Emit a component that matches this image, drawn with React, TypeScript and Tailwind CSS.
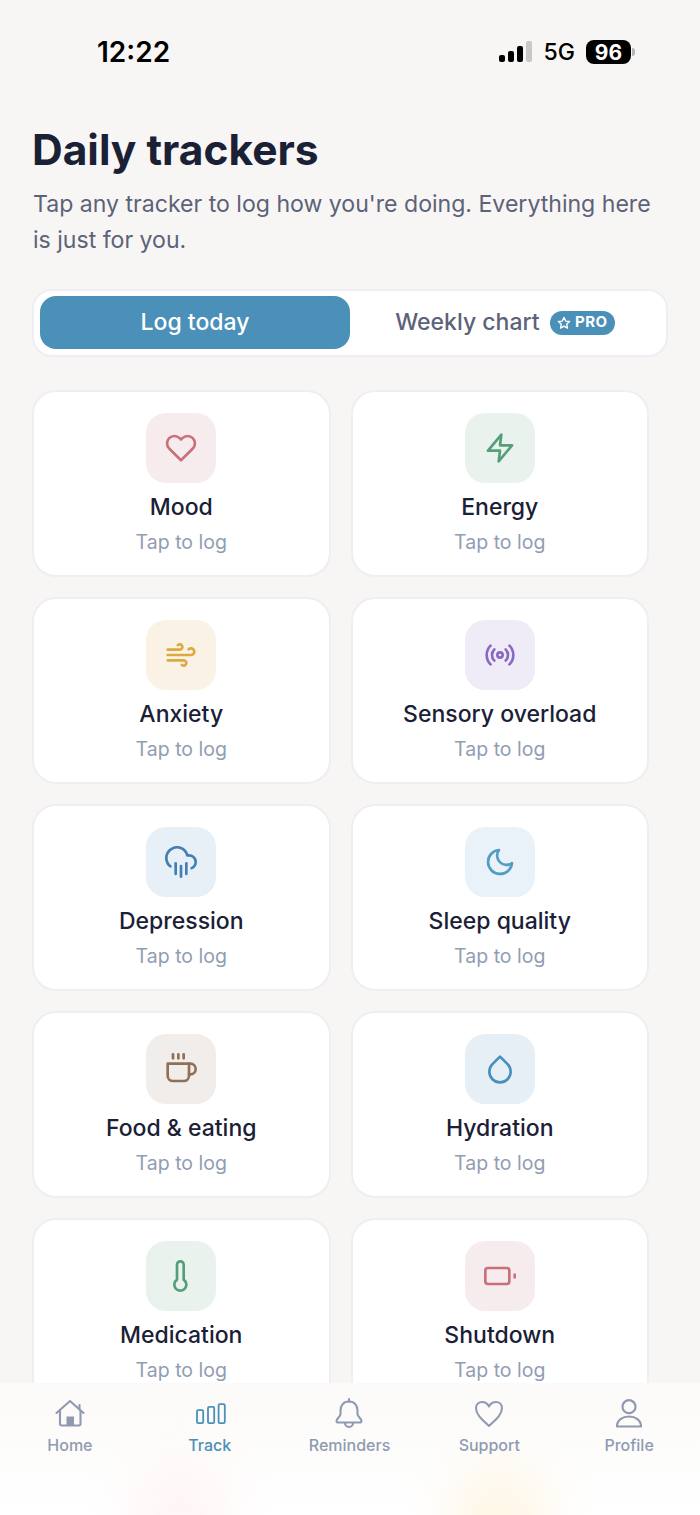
import React from 'react';
import { FiHeart, FiZap, FiWind, FiRadio, FiCloudRain, FiMoon, FiCoffee, FiDroplet, FiThermometer, FiBattery } from 'react-icons/fi';

const TRACKERS = [
  { name: 'Mood', Icon: FiHeart, box: 'bg-[#f6ecee]', color: 'text-[#c9707a]' },
  { name: 'Energy', Icon: FiZap, box: 'bg-[#e9f2ed]', color: 'text-[#559f78]' },
  { name: 'Anxiety', Icon: FiWind, box: 'bg-[#faf3e5]', color: 'text-[#dcaa42]' },
  { name: 'Sensory overload', Icon: FiRadio, box: 'bg-[#efecf7]', color: 'text-[#8a68c4]' },
  { name: 'Depression', Icon: FiCloudRain, box: 'bg-[#e7eff7]', color: 'text-[#437fb3]' },
  { name: 'Sleep quality', Icon: FiMoon, box: 'bg-[#e9f2f8]', color: 'text-[#529dc2]' },
  { name: 'Food & eating', Icon: FiCoffee, box: 'bg-[#f1edea]', color: 'text-[#8f7057]' },
  { name: 'Hydration', Icon: FiDroplet, box: 'bg-[#e7eff6]', color: 'text-[#4a8fbc]' },
  { name: 'Medication', Icon: FiThermometer, box: 'bg-[#e9f2ed]', color: 'text-[#559f78]' },
  { name: 'Shutdown', Icon: FiBattery, box: 'bg-[#f6ecee]', color: 'text-[#c9707a]' },
];

const NavSvg = ({ children, sw = 2.1 }: { children: React.ReactNode; sw?: number }) => (
  <svg width="34" height="34" viewBox="0 0 34 34" fill="none" stroke="currentColor" strokeWidth={sw} strokeLinecap="round" strokeLinejoin="round">
    {children}
  </svg>
);

const HomeIcon = () => (
  <NavSvg>
    <path d="M3.500 17 L17 5 L30.500 17" />
    <path d="M26.500 9 V13" />
    <path d="M7 14.500 V28 a1.500 1.500 0 0 0 1.500 1.500 H26 a1.500 1.500 0 0 0 1.500 -1.500 V14.500" />
    <rect x="13.500" y="20.500" width="7.500" height="9" fill="currentColor" stroke="none" />
  </NavSvg>
);

const TrackIcon = () => (
  <NavSvg sw={1.8}>
    <rect x="4" y="14.200" width="6.200" height="13" rx="1.200" />
    <rect x="15" y="10.900" width="6.200" height="16.300" rx="1.200" />
    <rect x="25.600" y="8.200" width="6.200" height="19" rx="1.200" />
  </NavSvg>
);

const BellIcon = () => (
  <NavSvg>
    <path d="M17 3 V5.500" />
    <path d="M17 5.500 C11 5.500 8.500 10 8.500 14.500 V18 C8.500 21 4.500 22.500 4.500 25 C4.500 26 5 26.500 6.500 26.500 H27.500 C29 26.500 29.500 26 29.500 25 C29.500 22.500 25.500 21 25.500 18 V14.500 C25.500 10 23 5.500 17 5.500 Z" />
    <path d="M13 27 a4 4 0 0 0 8 0" />
  </NavSvg>
);

const NavHeart = () => (
  <NavSvg>
    <path d="M17 30 C9.500 23 4 18.500 4 12 C4 8 7 6 10 6 C13 6 15.500 7.500 17 10.500 C18.500 7.500 21 6 24 6 C27 6 30 8 30 12 C30 18.500 24.500 23 17 30 Z" />
  </NavSvg>
);

const ProfileIcon = () => (
  <NavSvg sw={2.2}>
    <circle cx="17" cy="10.700" r="6.500" />
    <path d="M5 30.500 C5 24 10.500 20.500 17 20.500 C23.500 20.500 29 24 29 30.500 Z" />
  </NavSvg>
);

const NAV = [
  { label: 'Home', icon: <HomeIcon /> },
  { label: 'Track', icon: <TrackIcon />, active: true },
  { label: 'Reminders', icon: <BellIcon /> },
  { label: 'Support', icon: <NavHeart /> },
  { label: 'Profile', icon: <ProfileIcon /> },
];

const StatusBar = () => (
  <div className="h-[104px] shrink-0 flex items-center justify-between pl-[97px] pr-[65px] text-black">
    <span className="text-[28px] font-semibold leading-none">12:22</span>
    <div className="flex items-center">
      <svg width="36" height="24" viewBox="0 0 36 24" className="mr-[10px]">
        <rect x="1" y="15" width="6" height="7" rx="2" fill="#000" />
        <rect x="10" y="11" width="6" height="11" rx="2" fill="#000" />
        <rect x="19" y="6" width="6" height="16" rx="2" fill="#000" />
        <rect x="28" y="1" width="6" height="21" rx="2" fill="#c8c8c8" />
      </svg>
      <span className="text-[23px] font-medium leading-none">5G</span>
      <span className="ml-[11px] w-[45px] h-[24px] rounded-[8px] bg-black text-white text-[21px] font-bold leading-none flex items-center justify-center">96</span>
      <span className="ml-[1px] w-[3px] h-[8px] rounded-r-full bg-[#b5b5b5]" />
    </div>
  </div>
);

const App: React.FC = () => {
  return (
    <div className="relative h-[1515px] w-[700px] overflow-hidden flex flex-col bg-[#f7f6f4] font-['Inter',sans-serif]">
      <StatusBar />

      <main className="flex-1 min-h-0 overflow-hidden px-[32px] pt-[16px]">
        <h1 className="text-[42.500px] leading-[60px] font-bold text-[#1a2035]">Daily trackers</h1>
        <p className="ml-[1px] mt-[6px] text-[23.080px] leading-[36px] text-[#5c6278]">
          Tap any tracker to log how you're doing. Everything here is just for you.
        </p>

        {/* Tabs */}
        <div className="mt-[31px] w-[636px] h-[68px] px-[6px] pt-[5px] pb-[6px] rounded-[20px] bg-white border-2 border-[#eeeef3] flex">
          <button className="w-[310px] rounded-[16px] bg-[#4a90b8] text-white text-[23px] font-medium">Log today</button>
          <div className="flex-1 flex items-center justify-center gap-[10px] text-[23px] font-medium text-[#5c6278]">
            Weekly chart
            <span className="h-[24px] px-[7.500px] rounded-full bg-[#4a90b8] text-white text-[15px] font-bold tracking-wide flex items-center gap-[4px]">
              <svg width="14" height="14" viewBox="0 0 24 24" fill="none" stroke="currentColor" strokeWidth="2.400" strokeLinejoin="round">
                <path d="M12 2.500l2.900 6.200 6.600.8-4.900 4.600 1.300 6.700-5.900-3.300-5.900 3.300 1.300-6.700L2.500 9.500l6.600-.8z" />
              </svg>
              PRO
            </span>
          </div>
        </div>

        {/* Tracker cards */}
        <div className="mt-[33px] w-[617px] grid grid-cols-2 gap-x-[20px] gap-y-[20px]">
          {TRACKERS.map(({ name, Icon, box, color }) => (
            <div key={name} className="h-[187px] rounded-[24px] bg-white border-2 border-[#eeeef3] flex flex-col items-center pt-[21px]">
              <div className={`w-[70px] h-[70px] rounded-[20px] flex items-center justify-center ${box} ${color}`}>
                <Icon size={32} />
              </div>
              <div className="mt-[9px] text-[23px] leading-[30px] font-medium text-[#1a2035]">{name}</div>
              <div className="mt-[6px] text-[19.500px] leading-[28px] text-[#929db3]">Tap to log</div>
            </div>
          ))}
        </div>
      </main>

      {/* Bottom nav */}
      <nav className="relative h-[132px] shrink-0 overflow-hidden bg-linear-to-b from-[#fbfaf8] to-white pt-[13px]">
        <div className="absolute left-[130px] top-[80px] w-[100px] h-[110px] rounded-full bg-[#ffdcdc] opacity-25 blur-[25px]" />
        <div className="absolute left-[450px] top-[85px] w-[100px] h-[110px] rounded-full bg-[#ffe8b8] opacity-35 blur-[25px]" />
        <div className="relative grid grid-cols-5 pr-[1px]">
          {NAV.map((item) => (
            <div key={item.label} className={`flex flex-col items-center ${item.active ? 'text-[#4a90b8]' : 'text-[#8f9ab2]'}`}>
              {item.icon}
              <span className="mt-[3px] text-[16px] leading-[24px] font-medium">{item.label}</span>
            </div>
          ))}
        </div>
      </nav>
    </div>
  );
};

export default App;
